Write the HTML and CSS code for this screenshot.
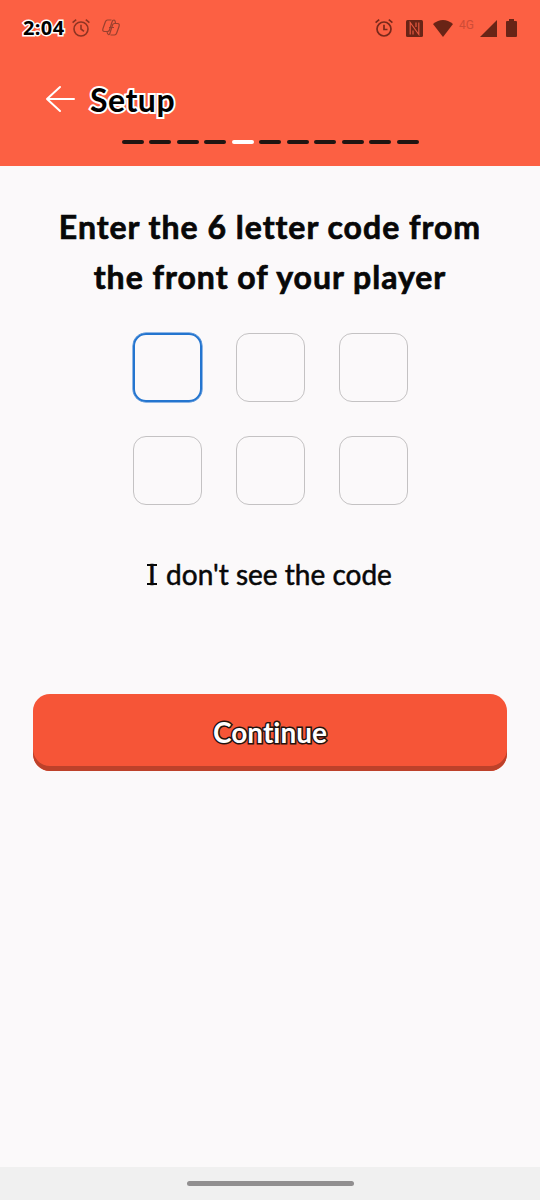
FILE: index.html
```html
<!DOCTYPE html>
<html lang="en">
<head>
<meta charset="utf-8">
<title>Setup</title>
<link rel="stylesheet" href="styles.css">
</head>
<body>
<header class="header">
  <div class="status">
    <span class="time">2:04</span>
    <svg class="alarm" width="20" height="20" viewBox="0 0 20 20" fill="none" stroke="#8e3423" stroke-width="1.6"><circle cx="10" cy="11" r="7"/><path d="M10 6.8V11l3 2.3M1.6 4.6 5.2 1.6M18.4 4.6 14.8 1.6"/></svg>
    <svg class="copilot" width="20" height="20" viewBox="0 0 20 20" fill="none" stroke="#98402f" stroke-width="1.2" stroke-linejoin="round"><path d="M10.500 2H6.500Q5 2 4.300 4L2 10.500Q1 13.500 3.500 13.500H6.500Q8 13.500 8.500 12L11 4Q11.500 2 13 2Q14.300 2 14.500 5.500"/><path d="M9.500 17H13.500Q15 17 15.700 15L18 8.500Q19 5.500 16.500 5.500H13.500Q12 5.500 11.500 7L9 15Q8.500 17 7.500 16.500Q6.300 16 6 13.500M8 9.500H13"/></svg>
    <div class="system">
      <svg class="alarm2" width="20" height="20" viewBox="0 0 20 20" fill="none" stroke="#78291b" stroke-width="1.7"><circle cx="10" cy="11" r="7"/><path d="M10 6.800V11.500H13.500M1.600 4.600 5.200 1.600M18.400 4.600 14.800 1.600"/></svg>
      <svg class="nfc" width="17" height="17" viewBox="0 0 17 17"><rect width="17" height="17" rx="1.500" fill="#692416"/><path d="M4.200 14.500V2.500L12.800 14.500V2.500M7 10.500V14.500M10 2.500V7" fill="none" stroke="#e45840" stroke-width="1.200"/></svg>
      <svg class="wifi" width="20" height="17" viewBox="0 0 20 17"><path d="M0 4Q10-4 20 4L10 17Z" fill="#692416"/></svg>
      <span class="network">4G</span>
      <svg class="signal" width="17" height="17" viewBox="0 0 17 17"><path d="M17 0V17H0Z" fill="#692416"/></svg>
      <svg class="battery" width="11" height="18" viewBox="0 0 11 18"><path d="M3 0h5v2h2q1 0 1 1v14q0 1-1 1H1q-1 0-1-1V3q0-1 1-1h2Z" fill="#692416"/></svg>
    </div>
  </div>
  <div class="titlebar">
    <svg width="30" height="28" viewBox="0 0 30 28" fill="none" stroke="#fff" stroke-width="2" stroke-linecap="round" stroke-linejoin="round"><path d="M29 14H2M15 2 2 14 15 26"/></svg>
    <h1 class="title">Setup</h1>
  </div>
  <div class="progress"><i></i><i></i><i></i><i></i><i class="current"></i><i></i><i></i><i></i><i></i><i></i><i></i></div>
</header>
<main class="content">
  <h2 class="heading"><span>Enter the 6 letter code from</span><span>the front of your player</span></h2>
  <div class="code"><span class="cell focused"></span><span class="cell"></span><span class="cell"></span><span class="cell"></span><span class="cell"></span><span class="cell"></span></div>
  <p class="help"><span class="serif-i">I</span> don't see the code</p>
  <button class="continue">Continue</button>
</main>
<footer class="nav"><div class="handle"></div></footer>
</body>
</html>
```
FILE: styles.css
```css
* { box-sizing: border-box; }
body {
  margin: 0;
  height: 1200px;
  display: flex;
  flex-direction: column;
  background: #fbf9fa;
  color: #080808;
  font-family: Lato, "Open Sans", sans-serif;
  font-variant-ligatures: none;
}
.header { height: 166px; background: #fc6043; }
.status { height: 56px; display: flex; align-items: center; padding: 0 23px; }
.time {
  width: 48px;
  font: 700 20px/24px "Noto Sans", sans-serif;
  letter-spacing: .4px;
  color: #000;
  -webkit-text-stroke: 3px #fff;
  paint-order: stroke fill;
}
.copilot { margin-left: 10px; }
.system { margin-left: auto; display: flex; align-items: center; }
.system svg { flex: none; }
.system .nfc { margin-left: 12px; }
.system .wifi { margin-left: 10px; }
.network {
  width: 17px;
  margin: -7px 0 0 6px;
  font: 12px/12px Roboto, sans-serif;
  color: #cf4c36;
}
.system .signal { margin-left: 4px; }
.system .battery { margin-left: 9px; }
.titlebar { height: 84px; display: flex; align-items: center; padding: 3px 0 0 45px; }
.titlebar svg { margin-bottom: 1px; }
.title {
  margin: 1px 0 0 15px;
  font-size: 32px;
  line-height: 40px;
  font-weight: 700;
  letter-spacing: .5px;
  color: #000;
  -webkit-text-stroke: 4px #fff;
  paint-order: stroke fill;
}
.progress { display: flex; justify-content: center; gap: 5.500px; }
.progress i { width: 22px; height: 4px; border-radius: 2px; background: #201512; }
.progress .current { background: #fff; }
.content { flex: 1; display: flex; flex-direction: column; align-items: center; }
.heading {
  margin: 36px 0 0;
  font-size: 32px;
  line-height: 50px;
  font-weight: 700;
  letter-spacing: 1px;
  text-align: center;
  -webkit-text-stroke: .7px #080808;
}
.heading span { display: block; white-space: nowrap; }
.code { display: grid; grid-template-columns: repeat(3, 69px); gap: 34px; margin: 31px 0 0 1px; }
.cell { height: 69px; border: 1px solid #c4c2c3; border-radius: 13px; }
.focused { border: 2px solid #2475cf; box-shadow: 0 0 0 .5px #2475cf; }
.help {
  margin: 49px 0 0;
  font-size: 28px;
  line-height: 40px;
  white-space: nowrap;
  -webkit-text-stroke: .5px #080808;
}
.serif-i { position: relative; margin-right: 3px; }
.serif-i::before, .serif-i::after {
  content: "";
  position: absolute;
  left: -1px;
  width: 10px;
  height: 2px;
  background: #080808;
}
.serif-i::before { top: 7px; }
.serif-i::after { bottom: 6px; }
.continue {
  width: 474px;
  height: 77px;
  margin-top: 100px;
  padding: 0 0 1px;
  border: 0;
  border-radius: 17px;
  background: #f65537;
  box-shadow: inset 0 -5px #bd412a;
  color: #fff;
  font: 700 28px/40px Lato, sans-serif;
  font-variant-ligatures: none;
  -webkit-text-stroke: 3px #24130f;
  paint-order: stroke fill;
}
.nav { height: 33px; background: #f0f0f0; padding-top: 14px; }
.handle { width: 167px; height: 5px; margin: 0 auto; border-radius: 3px; background: #918f90; }
```
